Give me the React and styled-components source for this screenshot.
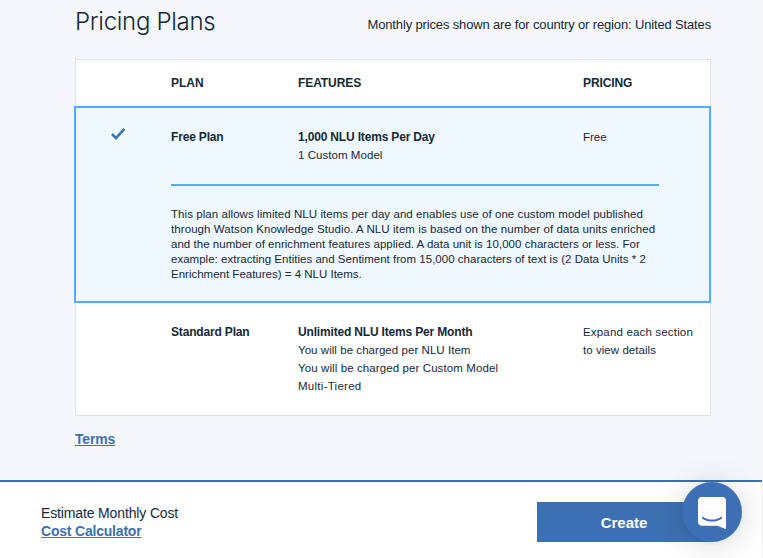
import React from "react";
import styled, { createGlobalStyle } from "styled-components";

const Global = createGlobalStyle`
  * { box-sizing: border-box; }
  body {
    margin: 0;
    overflow: hidden;
    background: #f5f7fb;
    color: #152935;
    font-family: "Liberation Sans", Arial, sans-serif;
  }
`;

const Page = styled.div`
  display: flex;
  flex-direction: column;
  height: 558px;
  border-right: 1px solid #f1f1f3;
`;

const Main = styled.main`
  flex: none;
  height: 480px;
  padding: 6px 51px 0 74px;
`;

const Heading = styled.header`
  display: flex;
  justify-content: space-between;
  height: 53px;
  padding-left: 1px;
`;

const Title = styled.h1`
  margin: 1px 0 0;
  font: 300 24px/30px Inter, sans-serif;
  letter-spacing: -0.3px;
`;

const Region = styled.p`
  margin: 9px 0 0;
  font-size: 13px;
  line-height: 20px;
  letter-spacing: -0.15px;
  white-space: nowrap;
`;

const Panel = styled.section`
  width: 636px;
  height: 357px;
  margin-left: 1px;
  background: #fff;
  border: 1px solid #dfe3e6;
`;

const Row = styled.div`
  display: grid;
  grid-template-columns: 95px 127px 285px 1fr;
  line-height: 18px;
`;

const HeadRow = styled(Row)`
  height: 46px;
  padding-top: 14px;
`;

const Selected = styled.div`
  width: 637px;
  height: 197px;
  margin: 0 -1px 0 -2px;
  padding-top: 20px;
  background: #eff7ff;
  border: 2px solid #5aaafa;
`;

const StandardRow = styled(Row)`
  padding-top: 20px;
`;

const Strong = styled.div`
  font-size: 12px;
  font-weight: 700;
  letter-spacing: ${(p) => p.$track ?? -0.17}px;
  white-space: nowrap;
`;

const Small = styled.div`
  font-size: 11.5px;
  letter-spacing: ${(p) => p.$track ?? 0}px;
  white-space: nowrap;
`;

const CheckCell = styled.div`
  padding: 0 0 0 35px;
  svg { display: block; }
`;

const Details = styled.div`
  width: 488px;
  margin: 20px 0 0 95px;
  padding-top: 21px;
  border-top: 2px solid #5aaafa;
  line-height: 15px;
`;

const Link = styled.a`
  display: block;
  width: max-content;
  color: #3d70b2;
  font-size: 14px;
  font-weight: 700;
  line-height: 18px;
  letter-spacing: -0.2px;
  text-decoration: underline;
`;

const TermsLink = styled(Link)`
  margin: 14px 0 0 1px;
`;

const Footer = styled.footer`
  display: flex;
  justify-content: space-between;
  height: 78px;
  padding: 20px 51px 0 41px;
  background: #fff;
  border-top: 2px solid #3d70b2;
`;

const Estimate = styled.div`
  padding-top: 2px;
  font-size: 14px;
  line-height: 18px;
  letter-spacing: -0.14px;
`;

const Create = styled.button`
  width: 174px;
  height: 40px;
  padding: 2px 0 0;
  border: 0;
  background: #3d70b2;
  color: #fff;
  font: 700 15px/38px "Liberation Sans", Arial, sans-serif;
`;

const Launcher = styled.div`
  position: fixed;
  left: 682px;
  top: 482px;
  width: 60px;
  height: 60px;
  padding: 15px 16px;
  border-radius: 50%;
  background: #3d70b2;
  box-shadow: 0 1px 6px rgba(0, 0, 0, 0.06), 0 2px 32px rgba(0, 0, 0, 0.16);
  svg { display: block; }
`;

const details = [
  ["This plan allows limited NLU items per day and enables use of one custom model published", 0.06],
  ["through Watson Knowledge Studio. A NLU item is based on the number of data units enriched", 0.08],
  ["and the number of enrichment features applied. A data unit is 10,000 characters or less. For", 0.03],
  ["example: extracting Entities and Sentiment from 15,000 characters of text is (2 Data Units * 2", 0.02],
  ["Enrichment Features) = 4 NLU Items.", 0],
];

export default function App() {
  return (
    <>
      <Global />
      <Page>
        <Main>
          <Heading>
            <Title>Pricing Plans</Title>
            <Region>Monthly prices shown are for country or region: United States</Region>
          </Heading>
          <Panel>
            <HeadRow>
              <span />
              <Strong $track={0}>PLAN</Strong>
              <Strong $track={-0.08}>FEATURES</Strong>
              <Strong $track={-0.1}>PRICING</Strong>
            </HeadRow>
            <Selected>
              <Row>
                <CheckCell>
                  <svg width="15" height="12" viewBox="0 0 15 12" fill="none" stroke="#3d70b2" strokeWidth="2.5">
                    <path d="M0.9 6 5 10.1 13.4 0.9" />
                  </svg>
                </CheckCell>
                <Strong>Free Plan</Strong>
                <div>
                  <Strong>1,000 NLU Items Per Day</Strong>
                  <Small $track={0.05}>1 Custom Model</Small>
                </div>
                <Small>Free</Small>
              </Row>
              <Details>
                {details.map(([text, track]) => (
                  <Small key={text} $track={track}>{text}</Small>
                ))}
              </Details>
            </Selected>
            <StandardRow>
              <span />
              <Strong>Standard Plan</Strong>
              <div>
                <Strong>Unlimited NLU Items Per Month</Strong>
                <Small $track={0.05}>You will be charged per NLU Item</Small>
                <Small $track={0.1}>You will be charged per Custom Model</Small>
                <Small $track={0.27}>Multi-Tiered</Small>
              </div>
              <div>
                <Small $track={0.17}>Expand each section</Small>
                <Small $track={0.05}>to view details</Small>
              </div>
            </StandardRow>
          </Panel>
          <TermsLink>Terms</TermsLink>
        </Main>
        <Footer>
          <Estimate>
            Estimate Monthly Cost
            <Link>Cost Calculator</Link>
          </Estimate>
          <Create>Create</Create>
        </Footer>
      </Page>
      <Launcher>
        <svg width="28" height="32" viewBox="0 0 28 32" fill="#fff">
          <path d="M28 32s-4.714-1.855-8.527-3.34H3.437C1.54 28.66 0 27.026 0 25.013V3.644C0 1.633 1.54 0 3.437 0h21.125c1.898 0 3.437 1.632 3.437 3.645v18.404H28V32zm-4.139-11.982a.88.88 0 00-1.292-.105c-.03.026-3.015 2.681-8.57 2.681-5.486 0-8.517-2.636-8.571-2.684a.88.88 0 00-1.29.107 1.01 1.01 0 00-.219.708.992.992 0 00.318.664c.142.128 3.537 3.15 9.762 3.15 6.226 0 9.621-3.022 9.763-3.15a.992.992 0 00.317-.664 1.01 1.01 0 00-.218-.707z" />
        </svg>
      </Launcher>
    </>
  );
}
